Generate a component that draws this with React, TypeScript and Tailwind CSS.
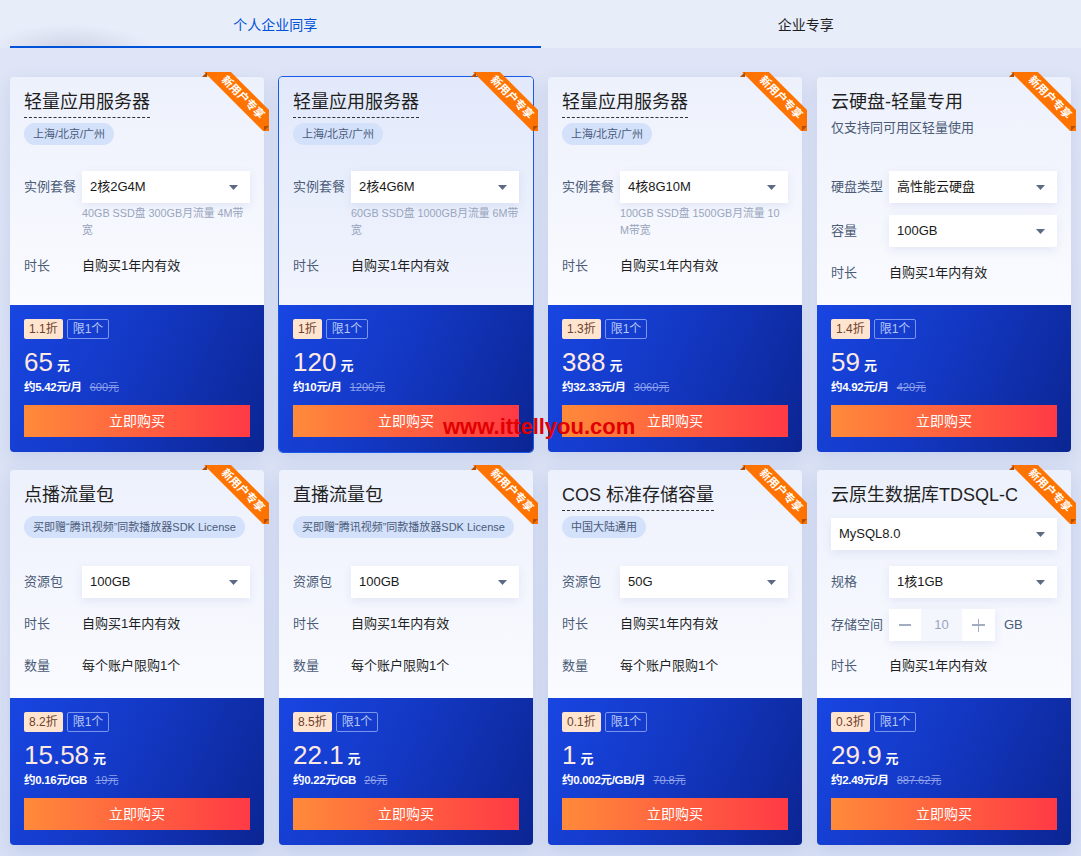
import React from "react";

const FONT = { fontFamily: '"Liberation Sans", "Noto Sans CJK SC", sans-serif' };

function Caret() {
  return (
    <svg width="9" height="5" viewBox="0 0 9 5" className="shrink-0">
      <path d="M0 0 L9 0 L4.5 5 Z" fill="#5b6a85" />
    </svg>
  );
}

function Select({ value, full }: { value: string; full?: boolean }) {
  return (
    <div
      className={
        "h-[32px] bg-white shadow-[0_3px_10px_rgba(60,90,170,0.10)] flex items-center justify-between pl-[8px] pr-[12px] text-[13px] text-[#1a1a1a] " +
        (full ? "w-full" : "w-[168px]")
      }
    >
      <span>{value}</span>
      <Caret />
    </div>
  );
}

function Label({ children }: { children: React.ReactNode }) {
  return <div className="w-[58px] shrink-0 text-[13px] text-[#4b5b76]">{children}</div>;
}

function SelectRow({ label, value, className = "" }: { label: string; value: string; className?: string }) {
  return (
    <div className={"flex items-center " + className}>
      <Label>{label}</Label>
      <Select value={value} />
    </div>
  );
}

function TextRow({ label, value, className = "" }: { label: string; value: string; className?: string }) {
  return (
    <div className={"flex items-center h-[20px] " + className}>
      <Label>{label}</Label>
      <div className="text-[13px] text-[#1f1f1f]">{value}</div>
    </div>
  );
}

function Ribbon() {
  return (
    <div className="absolute top-[-5px] right-[-5px] w-[67px] h-[59px] overflow-hidden pointer-events-none">
      <div className="absolute left-[-9px] top-[16px] w-[100px] h-[19px] rotate-45 bg-[#ff7300] flex items-center justify-center text-white text-[11px] font-bold leading-none">
        新用户专享
      </div>
      <div className="absolute left-0 top-0 w-0 h-0 border-t-[5px] border-t-transparent border-r-[5px] border-r-[#b24e00]" />
      <div className="absolute right-0 bottom-0 w-0 h-0 border-l-[5px] border-l-[#b24e00] border-b-[5px] border-b-transparent" />
    </div>
  );
}

type CardProps = {
  title: string;
  underline?: boolean;
  tag?: string;
  subtitle?: string;
  body: React.ReactNode;
  discount: string;
  price: string;
  sub: string;
  orig: string;
  active?: boolean;
};

function Card({ title, underline, tag, subtitle, body, discount, price, sub, orig, active }: CardProps) {
  return (
    <div
      className={
        "relative h-[375px] flex flex-col rounded-[4px] shadow-[0_6px_18px_rgba(40,70,170,0.12)] " +
        (active ? "ring-1 ring-[#1a5ae6]" : "")
      }
    >
      <div
        className={
          "h-[228px] rounded-t-[4px] px-[14px] pt-[13px] flex flex-col items-start " +
          (active
            ? "bg-[linear-gradient(180deg,#e2e9fb_0%,#f1f4fd_100%)]"
            : "bg-[linear-gradient(180deg,#edf1fc_0%,#fafbff_100%)]")
        }
      >
        <div
          className={
            "text-[18px] leading-[25px] text-[#1f1f1f] pb-[2px] border-b " +
            (underline ? "border-dashed border-[#333]" : "border-transparent")
          }
        >
          {title}
        </div>
        {tag && (
          <div className="mt-[5px] h-[22px] px-[9px] rounded-full bg-[#d3e1fb] text-[11px] text-[#4a5a78] flex items-center whitespace-nowrap">
            {tag}
          </div>
        )}
        {subtitle && <div className="leading-[20px] text-[13px] text-[#4b5b76]">{subtitle}</div>}
        <div className="w-full">{body}</div>
      </div>
      <div className="h-[147px] rounded-b-[4px] px-[14px] pt-[14px] bg-[linear-gradient(115deg,#1846e2_0%,#1338c4_45%,#0b2592_100%)] flex flex-col">
        <div className="flex items-center gap-[4px]">
          <div className="h-[20px] px-[5px] rounded-[2px] bg-[#ffe4cf] text-[#6d3f2c] text-[12px] flex items-center">
            {discount}
          </div>
          <div className="h-[20px] px-[5px] rounded-[2px] border border-[#7b95ee] text-[#b8c7f7] text-[12px] flex items-center">
            限1个
          </div>
        </div>
        <div className="mt-[8px] h-[30px] flex items-end">
          <span className="text-[26px] leading-[30px] text-[#fde8e2]">{price}</span>
          <span className="ml-[4px] mb-[4px] text-[13px] leading-[14px] font-bold text-white">元</span>
        </div>
        <div className="mt-[2px] leading-[16px] flex items-center">
          <span className="text-[11.5px] font-bold text-white tracking-[-0.3px]">{sub}</span>
          <span className="ml-[8px] text-[11px] text-[#8ea1ea] line-through">{orig}</span>
        </div>
        <div className="mt-[10px] h-[32px] bg-[linear-gradient(90deg,#ff8a3a_0%,#ff3a45_100%)] flex items-center justify-center text-white text-[14px]">
          立即购买
        </div>
      </div>
      <Ribbon />
    </div>
  );
}

function Desc({ children }: { children: React.ReactNode }) {
  return (
    <div className="flex mt-[2px]">
      <div className="w-[58px] shrink-0" />
      <div className="w-[168px] text-[10.8px] leading-[17px] text-[#98a5bd] break-all">{children}</div>
    </div>
  );
}

function LightBody({ plan, desc }: { plan: string; desc: string }) {
  return (
    <>
      <SelectRow label="实例套餐" value={plan} className="mt-[26px]" />
      <Desc>{desc}</Desc>
      <TextRow label="时长" value="自购买1年内有效" className="mt-[17px]" />
    </>
  );
}

function TrafficBody({ value }: { value: string }) {
  return (
    <>
      <SelectRow label="资源包" value={value} className="mt-[28px]" />
      <TextRow label="时长" value="自购买1年内有效" className="mt-[16px]" />
      <TextRow label="数量" value="每个账户限购1个" className="mt-[22px]" />
    </>
  );
}

function Stepper() {
  return (
    <div className="flex items-center">
      <Label>存储空间</Label>
      <div className="flex items-center h-[32px] shadow-[0_3px_10px_rgba(60,90,170,0.10)]">
        <div className="w-[32px] h-[32px] bg-white flex items-center justify-center">
          <div className="w-[12px] h-[1.5px] bg-[#a3adc0]" />
        </div>
        <div className="w-[41px] h-[32px] bg-[#f4f6fd] flex items-center justify-center text-[13px] text-[#98a5bd]">
          10
        </div>
        <div className="w-[33px] h-[32px] bg-white flex items-center justify-center relative">
          <div className="w-[13px] h-[1.5px] bg-[#a3adc0]" />
          <div className="absolute w-[1.5px] h-[13px] bg-[#a3adc0]" />
        </div>
      </div>
      <span className="ml-[9px] text-[13px] text-[#4b5b76]">GB</span>
    </div>
  );
}

export default function App() {
  return (
    <div
      className="relative w-[1081px] min-h-[856px] bg-[linear-gradient(180deg,#dfe5f6_0%,#d8e0f4_100%)]"
      style={FONT}
    >
      <div className="h-[48px] px-[10px] bg-[#e8edfa] bg-[radial-gradient(ellipse_120px_40px_at_70px_52px,rgba(180,188,210,0.55),transparent_70%)] flex">
        <div className="flex-1 flex items-center justify-center border-b-2 border-[#0052d9] text-[14px] text-[#0052d9] pt-[4px]">
          个人企业同享
        </div>
        <div className="flex-1 flex items-center justify-center text-[14px] text-[#1f1f1f] pt-[2px]">
          企业专享
        </div>
      </div>
      <div className="mt-[29px] px-[10px] grid grid-cols-4 gap-x-[15px] gap-y-[18px]">
        <Card
          title="轻量应用服务器"
          underline
          tag="上海/北京/广州"
          body={<LightBody plan="2核2G4M" desc="40GB SSD盘 300GB月流量 4M带宽" />}
          discount="1.1折"
          price="65"
          sub="约5.42元/月"
          orig="600元"
        />
        <Card
          title="轻量应用服务器"
          underline
          tag="上海/北京/广州"
          active
          body={<LightBody plan="2核4G6M" desc="60GB SSD盘 1000GB月流量 6M带宽" />}
          discount="1折"
          price="120"
          sub="约10元/月"
          orig="1200元"
        />
        <Card
          title="轻量应用服务器"
          underline
          tag="上海/北京/广州"
          body={<LightBody plan="4核8G10M" desc="100GB SSD盘 1500GB月流量 10M带宽" />}
          discount="1.3折"
          price="388"
          sub="约32.33元/月"
          orig="3060元"
        />
        <Card
          title="云硬盘-轻量专用"
          subtitle="仅支持同可用区轻量使用"
          body={
            <>
              <SelectRow label="硬盘类型" value="高性能云硬盘" className="mt-[33px]" />
              <SelectRow label="容量" value="100GB" className="mt-[12px]" />
              <TextRow label="时长" value="自购买1年内有效" className="mt-[16px]" />
            </>
          }
          discount="1.4折"
          price="59"
          sub="约4.92元/月"
          orig="420元"
        />
        <Card
          title="点播流量包"
          tag={"买即赠“腾讯视频”同款播放器SDK License"}
          body={<TrafficBody value="100GB" />}
          discount="8.2折"
          price="15.58"
          sub="约0.16元/GB"
          orig="19元"
        />
        <Card
          title="直播流量包"
          tag={"买即赠“腾讯视频”同款播放器SDK License"}
          body={<TrafficBody value="100GB" />}
          discount="8.5折"
          price="22.1"
          sub="约0.22元/GB"
          orig="26元"
        />
        <Card
          title="COS 标准存储容量"
          underline
          tag="中国大陆通用"
          body={<TrafficBody value="50G" />}
          discount="0.1折"
          price="1"
          sub="约0.002元/GB/月"
          orig="70.8元"
        />
        <Card
          title="云原生数据库TDSQL-C"
          body={
            <>
              <div className="mt-[7px]">
                <Select value="MySQL8.0" full />
              </div>
              <SelectRow label="规格" value="1核1GB" className="mt-[16px]" />
              <div className="mt-[11px]">
                <Stepper />
              </div>
              <TextRow label="时长" value="自购买1年内有效" className="mt-[15px]" />
            </>
          }
          discount="0.3折"
          price="29.9"
          sub="约2.49元/月"
          orig="887.62元"
        />
      </div>
      <div
        className="absolute left-[443px] top-[415px] text-[22px] leading-[23px] font-bold text-[#e10000] pointer-events-none"
        style={{ fontFamily: '"Liberation Sans", Arial, sans-serif' }}
      >
        www.ittellyou.com
      </div>
    </div>
  );
}
